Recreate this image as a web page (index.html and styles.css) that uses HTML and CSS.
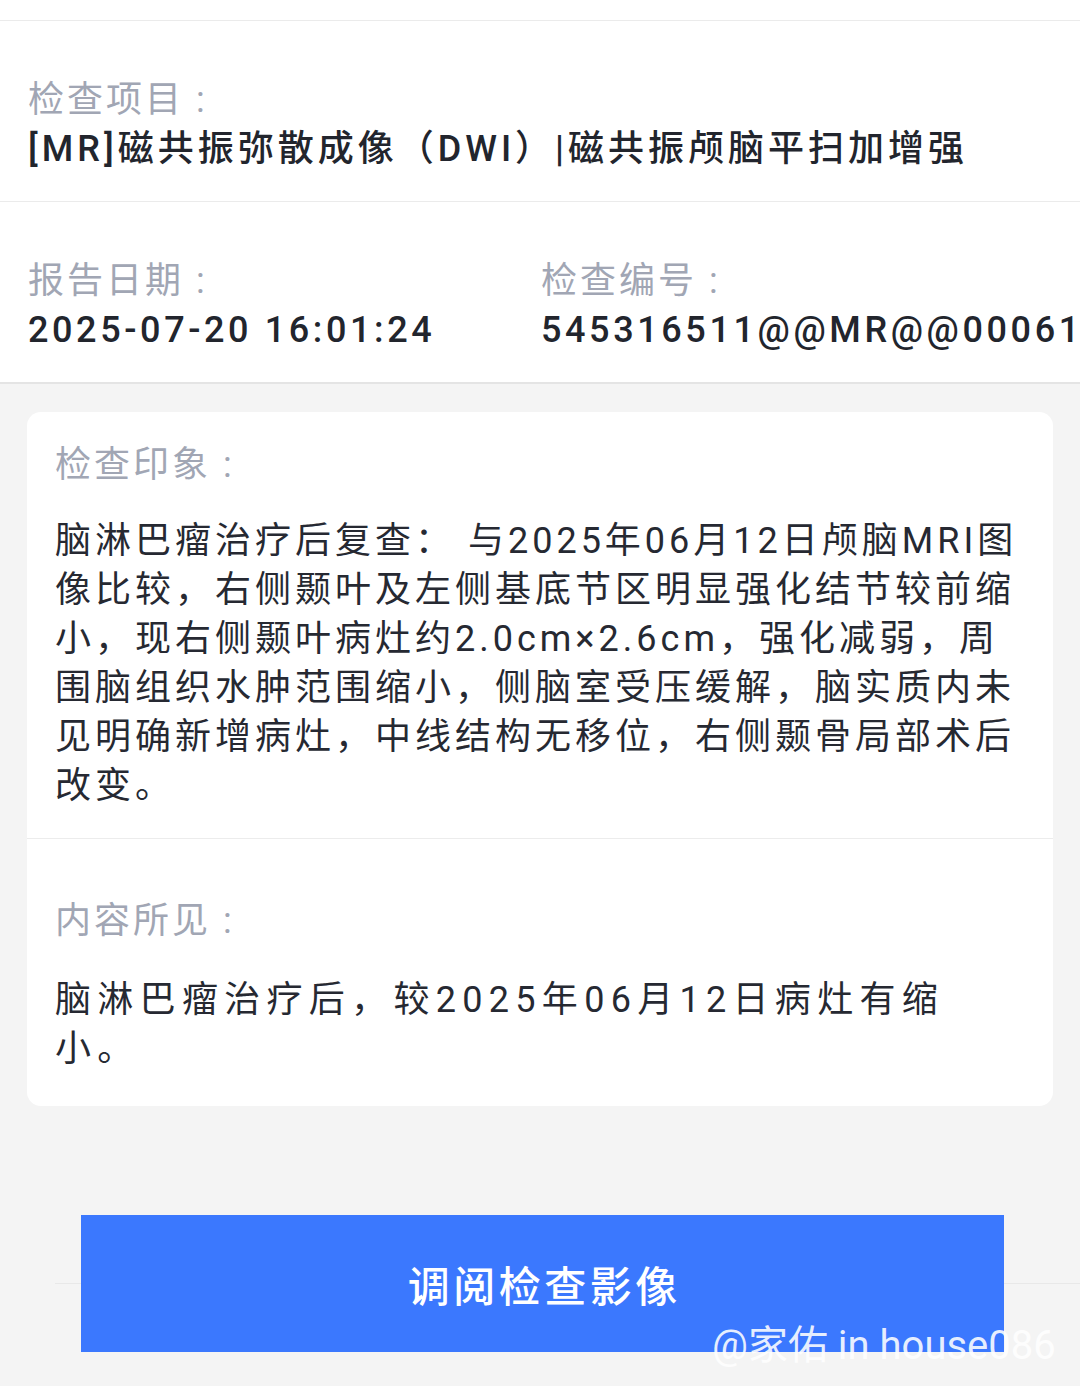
FILE: index.html
```html
<!DOCTYPE html>
<html lang="zh-CN">
  <head>
    <meta charset="UTF-8" />
    <meta name="viewport" content="width=device-width, initial-scale=1.0" />
    <title>检查报告</title>
    <link rel="stylesheet" href="styles.css">
  </head>
  <body>
    <div class="topbar"></div>

    <section class="info">
      <div class="field">
        <div class="label">检查项目 :</div>
        <div class="value">[MR]磁共振弥散成像（DWI）|磁共振颅脑平扫加增强</div>
      </div>
    </section>

    <section class="info info-cols">
      <div class="field">
        <div class="label">报告日期 :</div>
        <div class="value num">2025-07-20 16:01:24</div>
      </div>
      <div class="field">
        <div class="label">检查编号 :</div>
        <div class="value num nowrap">545316511@@MR@@00061</div>
      </div>
    </section>

    <main class="content">
      <div class="card">
        <div class="block">
          <div class="label">检查印象 :</div>
          <p class="text">
            脑淋巴瘤治疗后复查： 与2025年06月12日颅脑MRI图像比较，右侧颞叶及左侧基底节区明显强化结节较前缩小，现右侧颞叶病灶约2.0cm×2.6cm，强化减弱，周围脑组织水肿范围缩小，侧脑室受压缓解，脑实质内未见明确新增病灶，中线结构无移位，右侧颞骨局部术后改变。
          </p>
        </div>
        <div class="block block-seen">
          <div class="label">内容所见 :</div>
          <p class="text text-short">脑淋巴瘤治疗后，较2025年06月12日病灶有缩小。</p>
        </div>
      </div>
    </main>

    <footer class="footer">
      <button class="btn">调阅检查影像</button>
      <span class="watermark">@家佑 in house086</span>
    </footer>
  </body>
</html>
```

FILE: styles.css
```css
html,
body {
  margin: 0;
  padding: 0;
}
body {
  width: 1080px;
  min-height: 1386px;
  overflow: hidden;
  background: #f4f4f4;
  font-family: "Roboto", "Noto Sans CJK SC", sans-serif;
  font-size: 36px;
  line-height: 49px;
  letter-spacing: 4px;
  color: #262932;
}
.topbar {
  height: 20px;
  background: #fff;
  border-bottom: 1px solid #ebebeb;
}
.info {
  background: #fff;
  padding: 55px 0 27px 28px;
  border-bottom: 1px solid #ebebeb;
  overflow: hidden;
}
.info-cols {
  display: grid;
  grid-template-columns: 513px 1fr;
  border-bottom: 2px solid #e4e4e4;
}
.label {
  color: #a1a6b4;
  letter-spacing: 3px;
}
.value {
  font-weight: 500;
  color: #22252d;
}
.num {
  letter-spacing: 3.6px;
}
.nowrap {
  white-space: nowrap;
}
.content {
  padding: 28px 27px 0;
}
.card {
  background: #fff;
  border-radius: 14px;
  overflow: hidden;
}
.block {
  padding: 29px 28px 27px;
}
.block-seen {
  border-top: 1px solid #ececec;
  padding-top: 58px;
  padding-bottom: 32px;
}
.text {
  margin: 27px 0 0;
}
.block-seen .text {
  margin-top: 30px;
}
.text-short {
  letter-spacing: 6.3px;
  padding-right: 40px;
}
.footer {
  position: relative;
  display: flex;
  padding: 109px 0 0 81px;
}
.footer::before {
  content: "";
  position: absolute;
  left: 55px;
  right: 0;
  top: 177px;
  border-top: 1px solid #e8e8e8;
}
.btn {
  position: relative;
  width: 923px;
  height: 137px;
  padding: 0;
  border: 0;
  border-radius: 0;
  background: #3b78fe;
  color: #fff;
  font-family: "Noto Sans CJK SC", sans-serif;
  font-size: 42px;
  font-weight: 500;
  letter-spacing: 3.5px;
  text-indent: 3.5px;
}
.watermark {
  position: absolute;
  left: 712px;
  top: 220px;
  font-family: "Roboto", "Noto Sans CJK SC", sans-serif;
  font-size: 40px;
  line-height: 40px;
  letter-spacing: 0;
  color: rgba(255, 255, 255, 0.88);
  white-space: nowrap;
}
```
